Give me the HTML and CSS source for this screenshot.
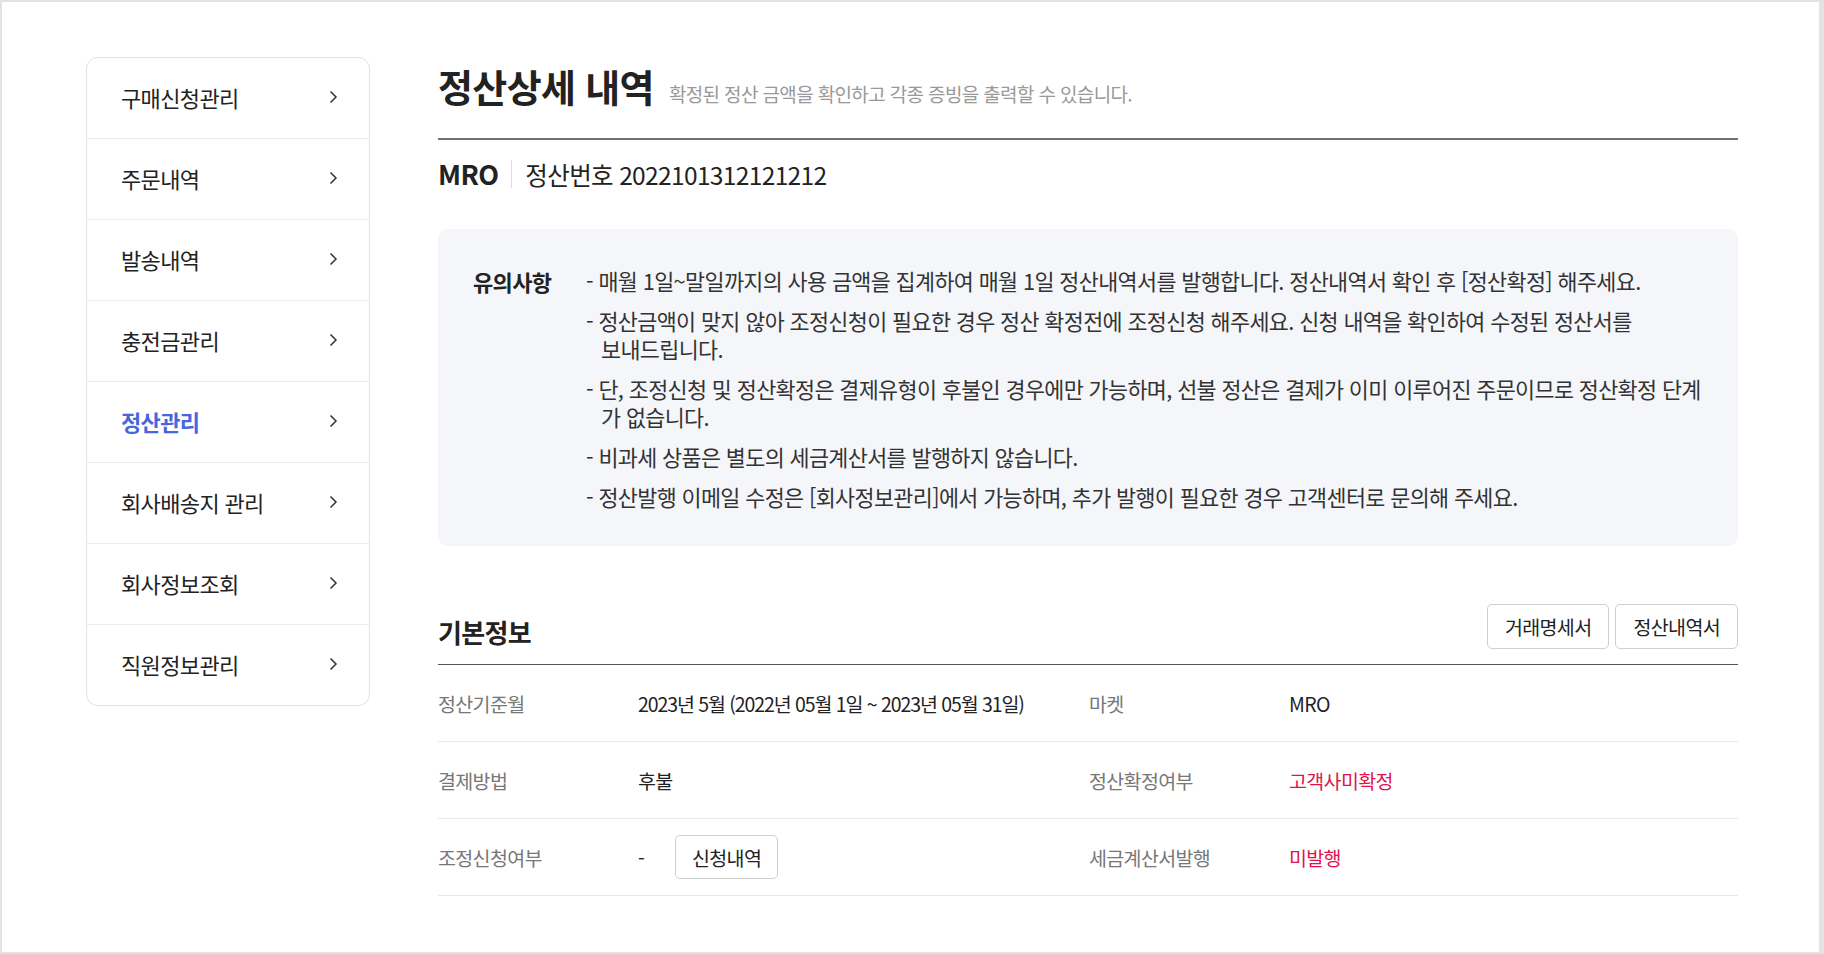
FILE: index.html
```html
<!DOCTYPE html>
<html lang="ko">
<head>
<meta charset="utf-8">
<title>정산상세 내역</title>
<link rel="stylesheet" href="styles.css">
</head>
<body>
<div class="frame">
  <nav class="side">
    <a class="side-item">구매신청관리<svg class="chev" viewBox="0 0 9 14"><polyline points="1.5,1.5 7,7 1.5,12.5"/></svg></a>
    <a class="side-item">주문내역<svg class="chev" viewBox="0 0 9 14"><polyline points="1.5,1.5 7,7 1.5,12.5"/></svg></a>
    <a class="side-item">발송내역<svg class="chev" viewBox="0 0 9 14"><polyline points="1.5,1.5 7,7 1.5,12.5"/></svg></a>
    <a class="side-item">충전금관리<svg class="chev" viewBox="0 0 9 14"><polyline points="1.5,1.5 7,7 1.5,12.5"/></svg></a>
    <a class="side-item active">정산관리<svg class="chev" viewBox="0 0 9 14"><polyline points="1.5,1.5 7,7 1.5,12.5"/></svg></a>
    <a class="side-item">회사배송지 관리<svg class="chev" viewBox="0 0 9 14"><polyline points="1.5,1.5 7,7 1.5,12.5"/></svg></a>
    <a class="side-item">회사정보조회<svg class="chev" viewBox="0 0 9 14"><polyline points="1.5,1.5 7,7 1.5,12.5"/></svg></a>
    <a class="side-item">직원정보관리<svg class="chev" viewBox="0 0 9 14"><polyline points="1.5,1.5 7,7 1.5,12.5"/></svg></a>
  </nav>
  <main class="main">
    <div class="title-row">
      <h1 class="title">정산상세 내역</h1>
      <p class="subtitle">확정된 정산 금액을 확인하고 각종 증빙을 출력할 수 있습니다.</p>
    </div>
    <div class="order-row">
      <span class="market">MRO</span>
      <span class="order-no">정산번호 2022101312121212</span>
    </div>
    <section class="notice">
      <h2 class="notice-label">유의사항</h2>
      <ul class="notice-list">
        <li>매월 1일~말일까지의 사용 금액을 집계하여 매월 1일 정산내역서를 발행합니다. 정산내역서 확인 후 [정산확정] 해주세요.</li>
        <li>정산금액이 맞지 않아 조정신청이 필요한 경우 정산 확정전에 조정신청 해주세요. 신청 내역을 확인하여 수정된 정산서를<br>보내드립니다.</li>
        <li>단, 조정신청 및 정산확정은 결제유형이 후불인 경우에만 가능하며, 선불 정산은 결제가 이미 이루어진 주문이므로 정산확정 단계<br>가 없습니다.</li>
        <li>비과세 상품은 별도의 세금계산서를 발행하지 않습니다.</li>
        <li>정산발행 이메일 수정은 [회사정보관리]에서 가능하며, 추가 발행이 필요한 경우 고객센터로 문의해 주세요.</li>
      </ul>
    </section>
    <div class="section-head">
      <h2 class="section-title">기본정보</h2>
      <div class="btns">
        <button class="btn">거래명세서</button>
        <button class="btn">정산내역서</button>
      </div>
    </div>
    <div class="info">
      <div class="row">
        <div class="lbl">정산기준월</div>
        <div class="val num">2023년 5월 (2022년 05월 1일 ~ 2023년 05월 31일)</div>
        <div class="lbl">마켓</div>
        <div class="val">MRO</div>
      </div>
      <div class="row">
        <div class="lbl">결제방법</div>
        <div class="val">후불</div>
        <div class="lbl">정산확정여부</div>
        <div class="val red">고객사미확정</div>
      </div>
      <div class="row">
        <div class="lbl">조정신청여부</div>
        <div class="val"><span class="dash">-</span><button class="btn btn-sm">신청내역</button></div>
        <div class="lbl">세금계산서발행</div>
        <div class="val red">미발행</div>
      </div>
    </div>
  </main>
</div>
</body>
</html>
```

FILE: styles.css
```css
* { box-sizing: border-box; }
html, body { margin: 0; padding: 0; }
body {
  font-family: "Noto Sans CJK KR", "Noto Sans", sans-serif;
  color: #222;
  background: #fff;
  letter-spacing: -0.04em;
}
.frame {
  width: 1824px;
  height: 954px;
  border-style: solid;
  border-color: #e3e3e3;
  border-width: 2px 5px 2px 2px;
  display: flex;
  align-items: flex-start;
  padding: 55px 0 0 84px;
  gap: 68px;
}
.side {
  width: 284px;
  flex: none;
  border: 1px solid #e3e3e3;
  border-radius: 12px;
  display: flex;
  flex-direction: column;
}
.side-item {
  height: 81px;
  display: flex;
  align-items: center;
  justify-content: space-between;
  padding: 0 31px 3px 34px;
  font-size: 22px;
  color: #222;
  border-bottom: 1px solid #ebebeb;
}
.side-item:last-child { border-bottom: 0; height: 80px; }
.side-item.active { color: #4766de; font-weight: 700; }
.chev { width: 9px; height: 14px; fill: none; stroke: #333; stroke-width: 1.5; }
.main { width: 1300px; flex: none; }
.title-row {
  display: flex;
  align-items: baseline;
  gap: 15px;
  margin-top: 4px;
  padding-bottom: 27px;
  border-bottom: 2px solid #707070;
}
.title {
  margin: 0;
  font-size: 38px;
  line-height: 50px;
  font-weight: 700;
  color: #222;
}
.subtitle { margin: 0; font-size: 19px; color: #999; }
.order-row {
  display: flex;
  align-items: center;
  margin-top: 18px;
  height: 32px;
}
.market {
  font-size: 27px;
  font-weight: 700;
  padding-right: 13px;
  border-right: 1px solid #dcdcdc;
  line-height: 28px;
}
.order-no { font-size: 24.5px; padding-left: 13px; }
.notice {
  margin-top: 39px;
  background: #f5f6fa;
  border-radius: 10px;
  padding: 38px 10px 35px 35px;
  display: flex;
}
.notice-label {
  margin: 0;
  width: 113px;
  flex: none;
  font-size: 22px;
  line-height: 28px;
  font-weight: 700;
}
.notice-list {
  margin: 0;
  padding: 0;
  list-style: none;
  font-size: 21.8px;
  line-height: 28px;
  color: #333;
  word-break: keep-all;
}
.notice-list li { padding-left: 15px; text-indent: -15px; }
.notice-list li + li { margin-top: 12px; }
.notice-list li::before { content: "- "; }
.section-head {
  margin-top: 58px;
  display: flex;
  justify-content: space-between;
  align-items: flex-end;
  padding-bottom: 15px;
  border-bottom: 1px solid #555;
}
.section-title {
  margin: 0;
  font-size: 26px;
  line-height: 34px;
  font-weight: 700;
}
.btns { display: flex; gap: 6px; }
.btn {
  font-family: inherit;
  letter-spacing: inherit;
  height: 45px;
  padding: 0 17px;
  background: #fff;
  border: 1px solid #cfcfcf;
  border-radius: 5px;
  font-size: 19.5px;
  color: #222;
}
.btn-sm { height: 44px; padding: 0 16px; }
.row {
  display: grid;
  grid-template-columns: 200px 451px 200px 449px;
  align-items: center;
  height: 77px;
  border-bottom: 1px solid #e8e8e8;
  font-size: 19.5px;
}
.lbl { color: #777; }
.val { color: #222; display: flex; align-items: center; }
.num { letter-spacing: -0.055em; }
.red { color: #e0144c; }
.dash { width: 37px; }
```
